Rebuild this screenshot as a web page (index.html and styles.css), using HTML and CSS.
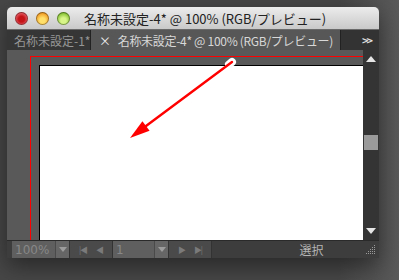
FILE: index.html
```html
<!DOCTYPE html>
<html lang="ja">
<head>
    <meta charset="UTF-8">
    <title>名称未設定-4* @ 100% (RGB/プレビュー)</title>
    <link rel="stylesheet" href="styles.css">
</head>
<body>

<div class="desktop">
    <div class="window">
        <div class="titlebar">
            <div class="lights">
                <span class="light red"></span>
                <span class="light orange"></span>
                <span class="light green"></span>
            </div>
            <span class="title">名称未設定-4* @ 100% (RGB/プレビュー)</span>
        </div>

        <div class="tabs">
            <div class="tab">名称未設定-1*</div>
            <div class="tab active"><span class="close">×</span>名称未設定-4* @ 100% (RGB/プレビュー)</div>
            <div class="tab-more">&gt;&gt;</div>
        </div>

        <div class="doc">
            <div class="canvas">
                <div class="bleed">
                    <div class="artboard"></div>
                </div>
                <!-- selected path drawn over the artboard -->
                <svg class="drawing" width="356" height="190" viewBox="0 0 356 190">
                    <line x1="225" y1="12" x2="222" y2="14.3" stroke="#fff" stroke-width="8" stroke-linecap="round"/>
                    <line x1="225" y1="12" x2="139" y2="76" stroke="#f00" stroke-width="2.4" stroke-linecap="round"/>
                    <polygon points="123,88 142.6,80.8 135.4,71.2" fill="#f00"/>
                </svg>
            </div>
            <div class="vscroll">
                <div class="scroll-btn"><span class="tri-up"></span></div>
                <div class="track"><div class="thumb"></div></div>
                <div class="scroll-btn"><span class="tri-down"></span></div>
            </div>
        </div>

        <div class="statusbar">
            <div class="field zoom">100%</div>
            <div class="drop"><span class="tri-down small"></span></div>
            <div class="nav">
                <span class="nav-icon">|◀</span>
                <span class="nav-icon">◀</span>
            </div>
            <div class="field page">1</div>
            <div class="drop"><span class="tri-down small"></span></div>
            <div class="nav">
                <span class="nav-icon">▶</span>
                <span class="nav-icon">▶|</span>
            </div>
            <div class="status">選択</div>
            <div class="grip">
                <svg width="10" height="10" viewBox="0 0 10 10">
                    <g fill="#9a9a9a">
                        <rect x="8" y="0" width="1" height="1"/>
                        <rect x="6" y="2" width="1" height="1"/><rect x="8" y="2" width="1" height="1"/>
                        <rect x="4" y="4" width="1" height="1"/><rect x="6" y="4" width="1" height="1"/><rect x="8" y="4" width="1" height="1"/>
                        <rect x="2" y="6" width="1" height="1"/><rect x="4" y="6" width="1" height="1"/><rect x="6" y="6" width="1" height="1"/><rect x="8" y="6" width="1" height="1"/>
                        <rect x="0" y="8" width="1" height="1"/><rect x="2" y="8" width="1" height="1"/><rect x="4" y="8" width="1" height="1"/><rect x="6" y="8" width="1" height="1"/><rect x="8" y="8" width="1" height="1"/>
                    </g>
                </svg>
            </div>
        </div>
    </div>
</div>

</body>
</html>
```

FILE: styles.css
```css
body {
    margin: 0;
    font-family: "Noto Sans CJK JP", "Noto Sans", sans-serif;
    background: #444;
}

.desktop {
    width: 399px;
    height: 280px;
    padding: 7px 0 0 7px;
    box-sizing: border-box;
    overflow: hidden;
    background: linear-gradient(to right, #474747 0%, #474747 85%, #5a5a5a 100%);
}

.window {
    width: 372px;
    display: flex;
    flex-direction: column;
    box-shadow: 0 8px 22px rgba(0, 0, 0, 0.45);
}

/* title bar */
.titlebar {
    height: 22px;
    display: flex;
    align-items: center;
    border-radius: 5px 5px 0 0;
    background: linear-gradient(#ececec, #c9c9c9);
    border-bottom: 1px solid #6a6a6a;
}

.lights {
    display: flex;
    gap: 8px;
    margin-left: 8px;
    margin-right: 14px;
}

.light {
    width: 13px;
    height: 13px;
    border-radius: 50%;
    box-shadow: inset 0 0 0 1px rgba(0, 0, 0, 0.35);
}

.red { background: radial-gradient(circle at 50% 55%, #c41418 0 30%, #e2535a 60%, #a80f12 100%); }
.orange { background: radial-gradient(circle at 50% 65%, #ffe06a 0 25%, #f3a12a 65%, #b26a10 100%); }
.green { background: radial-gradient(circle at 50% 65%, #d8f58a 0 25%, #8cc63a 65%, #4e8a1a 100%); }

.title {
    font-size: 13px;
    color: #222;
    white-space: nowrap;
}

/* document tabs */
.tabs {
    height: 20px;
    display: flex;
    background: #333;
    font-size: 12px;
    white-space: nowrap;
}

.tab {
    width: 84px;
    display: flex;
    align-items: center;
    padding-left: 7px;
    box-sizing: border-box;
    color: #969696;
    background: #363636;
    border-right: 1px solid #222;
}

.tab.active {
    width: 250px;
    padding-left: 8px;
    color: #d8d8d8;
    background: #575757;
    letter-spacing: -0.3px;
}

.close {
    margin-right: 7px;
    font-size: 12px;
    color: #eee;
}

.tab-more {
    flex: 1;
    display: flex;
    align-items: center;
    justify-content: flex-end;
    padding-right: 8px;
    color: #ddd;
    font-size: 11px;
    font-weight: bold;
    letter-spacing: -2px;
}

/* canvas + scrollbar */
.doc {
    height: 190px;
    display: flex;
}

.canvas {
    position: relative;
    width: 356px;
    padding: 6px 0 0 23px;
    box-sizing: border-box;
    background: #595959;
    display: flex;
}

.bleed {
    flex: 1;
    display: flex;
    padding: 8px 0 0 8px;
    border-top: 1px solid #f00;
    border-left: 1px solid #f00;
}

.artboard {
    flex: 1;
    background: #fff;
    border-top: 1px solid #000;
    border-left: 1px solid #000;
}

.drawing {
    position: absolute;
    left: 0;
    top: 0;
}

.vscroll {
    width: 16px;
    display: flex;
    flex-direction: column;
    background: #343434;
}

.scroll-btn {
    height: 18px;
    display: flex;
    align-items: center;
    justify-content: center;
}

.track {
    flex: 1;
    padding-top: 67px;
}

.thumb {
    height: 15px;
    margin: 0 1px;
    background: #9a9a9a;
}

.tri-up {
    width: 0;
    height: 0;
    border-left: 5px solid transparent;
    border-right: 5px solid transparent;
    border-bottom: 6px solid #e6e6e6;
}

.tri-down {
    width: 0;
    height: 0;
    border-left: 5px solid transparent;
    border-right: 5px solid transparent;
    border-top: 6px solid #e6e6e6;
}

.tri-down.small {
    border-left-width: 4px;
    border-right-width: 4px;
    border-top: 5px solid #9c9c9c;
}

/* status bar */
.statusbar {
    height: 17px;
    display: flex;
    align-items: stretch;
    padding-left: 5px;
    background: #3d3d3d;
    border-top: 1px solid #2a2a2a;
    font-size: 12px;
}

.field {
    display: flex;
    align-items: center;
    padding-left: 3px;
    color: #878787;
    background: #5f5f5f;
    border-right: 1px solid #4a4a4a;
    font-family: "DejaVu Sans", "Noto Sans CJK JP", sans-serif;
}

.zoom { width: 40px; }
.page { width: 38px; }

.drop {
    width: 13px;
    display: flex;
    align-items: center;
    justify-content: center;
    background: #666;
    border-right: 1px solid #333;
}

.nav {
    width: 42px;
    display: flex;
    align-items: center;
    justify-content: space-evenly;
    background: #4a4a4a;
    border-right: 1px solid #333;
    color: #7a7a7a;
    font-size: 8px;
    letter-spacing: -1px;
}

.status {
    flex: 1;
    display: flex;
    align-items: center;
    justify-content: center;
    padding-left: 48px;
    color: #b4b4b4;
    font-size: 12px;
}

.grip {
    width: 16px;
    display: flex;
    align-items: center;
    justify-content: center;
}
```
